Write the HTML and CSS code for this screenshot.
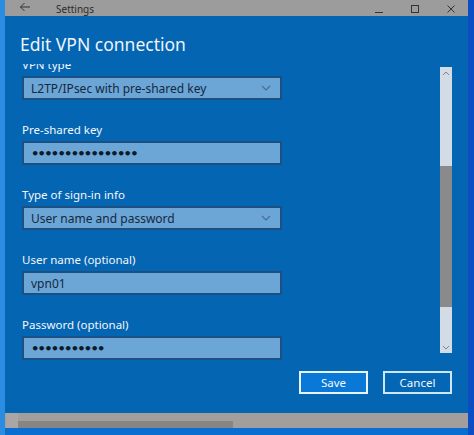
FILE: index.html
```html
<!DOCTYPE html>
<html>
<head>
<meta charset="utf-8">
<link rel="stylesheet" href="styles.css">
</head>
<body>
<div class="desk-left"></div>
<div class="window">
  <div class="titlebar">
    <svg class="back" width="12" height="10" viewBox="0 0 12 10"><path d="M11 5H1.5M5.5 1L1.5 5l4 4" fill="none" stroke="#333" stroke-width="1"/></svg>
    <span class="app">Settings</span>
    <span class="spacer"></span>
    <svg class="ctl" width="10" height="10" viewBox="0 0 10 10"><path d="M1 8.5h8" stroke="#333" stroke-width="1"/></svg>
    <svg class="ctl" width="10" height="10" viewBox="0 0 10 10"><rect x="1.5" y="1.5" width="7" height="7" fill="none" stroke="#333" stroke-width="1"/></svg>
    <svg class="ctl" width="10" height="10" viewBox="0 0 10 10"><path d="M1.5 1.5l7 7M8.5 1.5l-7 7" stroke="#333" stroke-width="1"/></svg>
  </div>
  <div class="dialog">
    <h1 class="title">Edit VPN connection</h1>
    <div class="main">
      <div class="form">
        <div class="inner">
          <div class="group">
            <div class="label">VPN type</div>
            <div class="field select"><span>L2TP/IPsec with pre-shared key</span>
              <svg width="10" height="6" viewBox="0 0 10 6"><path d="M1 1l4 4 4-4" fill="none" stroke="#4a6c8e" stroke-width="1.1"/></svg></div>
          </div>
          <div class="group">
            <div class="label">Pre-shared key</div>
            <div class="field"><span class="dots">••••••••••••••••</span></div>
          </div>
          <div class="group">
            <div class="label">Type of sign-in info</div>
            <div class="field select"><span>User name and password</span>
              <svg width="10" height="6" viewBox="0 0 10 6"><path d="M1 1l4 4 4-4" fill="none" stroke="#4a6c8e" stroke-width="1.1"/></svg></div>
          </div>
          <div class="group">
            <div class="label">User name (optional)</div>
            <div class="field"><span>vpn01</span></div>
          </div>
          <div class="group">
            <div class="label">Password (optional)</div>
            <div class="field"><span class="dots">•••••••••••</span></div>
          </div>
        </div>
      </div>
      <div class="scrollbar">
        <div class="track top"><svg width="8" height="5" viewBox="0 0 8 5"><path d="M1 4l3-3 3 3" fill="none" stroke="#7a8694" stroke-width="1"/></svg></div>
        <div class="thumb"></div>
        <div class="track bottom"><svg width="8" height="5" viewBox="0 0 8 5"><path d="M1 1l3 3 3-3" fill="none" stroke="#7a8694" stroke-width="1"/></svg></div>
      </div>
    </div>
    <div class="footer">
      <button class="btn primary">Save</button>
      <button class="btn">Cancel</button>
    </div>
  </div>
  <div class="hbar"><div class="hcorner"></div><div class="hthumb"></div></div>
  <div class="below"></div>
</div>
<div class="desk-right"></div>
</body>
</html>
```
FILE: styles.css
```css
html, body { margin: 0; padding: 0; }
body {
  width: 474px;
  height: 435px;
  overflow: hidden;
  display: flex;
  font-family: "Noto Sans", "Open Sans", sans-serif;
  background: #0a64c0;
}
.desk-left { width: 5px; background: #2a8de2; }
.desk-right { width: 6px; background: #0b4ec4; }
.window { width: 463px; display: flex; flex-direction: column; }
.titlebar {
  height: 16px;
  background: #9d9c9c;
  display: flex;
  align-items: flex-end;
  padding: 0 12px 0 14px;
  overflow: hidden;
}
.back { margin-bottom: 4px; }
.app { font-size: 10px; color: #2b2b2b; margin-left: 25px; line-height: 14px; }
.spacer { flex: 1; }
.ctl { margin-left: 26px; margin-bottom: 2px; }
.dialog {
  height: 397px;
  background: #0465b3;
  display: flex;
  flex-direction: column;
}
.title {
  margin: 0;
  height: 48px;
  padding-left: 15px;
  font-size: 17.5px;
  font-weight: 400;
  color: #eef4fa;
  line-height: 57px;
  box-sizing: border-box;
}
.main { height: 299px; display: flex; }
.form { flex: 1; overflow: hidden; padding-left: 17px; }
.inner { margin-top: -7px; }
.group { margin-bottom: 22px; }
.label { font-size: 11.5px; color: #f3f7fb; line-height: 16px; margin-bottom: 3px; }
.field {
  width: 260px;
  height: 24px;
  box-sizing: border-box;
  border: 2px solid #1c4f82;
  background: #6ba6d6;
  display: flex;
  align-items: center;
  padding: 0 9px 0 7px;
  font-size: 12px;
  color: #14283f;
}
.field span { flex: 1; }
.dots { font-size: 13px; letter-spacing: -1.7px; font-family: "DejaVu Sans", sans-serif; font-weight: bold; color: #0d1a2a; }
.scrollbar {
  width: 12px;
  margin: 3px 16px 10px 0;
  display: flex;
  flex-direction: column;
  background: #d3dce5;
}
.track { display: flex; justify-content: center; }
.track.top { height: 99px; align-items: flex-start; padding-top: 4px; box-sizing: border-box; }
.thumb { height: 141px; background: #8a8a8c; }
.track.bottom { flex: 1; align-items: flex-end; padding-bottom: 3px; }
.footer {
  display: flex;
  justify-content: flex-end;
  gap: 15px;
  padding: 8px 16px 0 0;
}
.btn {
  width: 69px;
  height: 23px;
  box-sizing: border-box;
  border: 2px solid #cfe6f6;
  background: #0467b5;
  color: #f4f8fc;
  font-family: "Noto Sans", "Open Sans", sans-serif;
  font-size: 11.5px;
  padding: 0;
}
.btn.primary { background: #0a78d6; border-color: #e8f4fc; }
.hbar {
  height: 15px;
  background: #a29e9e;
  display: flex;
  align-items: flex-end;
  padding-left: 1px;
}
.hcorner { width: 12px; height: 15px; background: #aaa6a6; }
.hthumb { width: 215px; height: 7px; background: #888585; }
.below { flex: 1; background: #0a6ed0; }
```
